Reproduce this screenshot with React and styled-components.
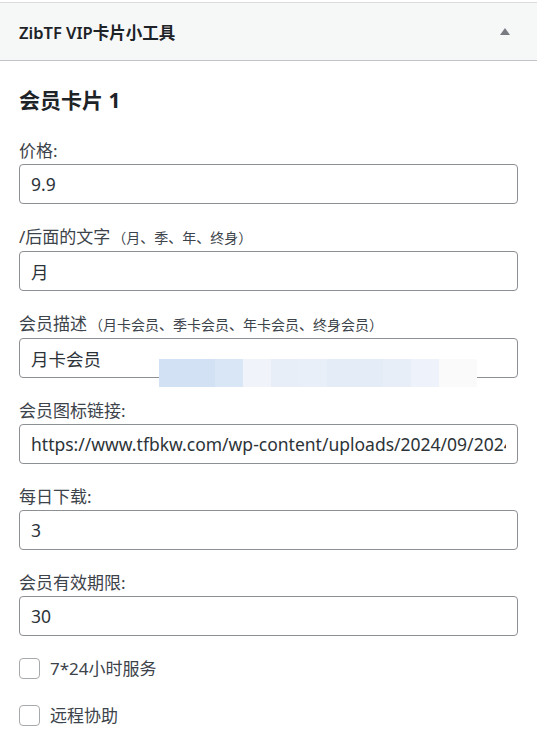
import React from 'react';
import styled, { createGlobalStyle } from 'styled-components';

const Global = createGlobalStyle`
  html, body { margin: 0; padding: 0; background: #fff; }
  body {
    font-family: "Noto Sans", "Noto Sans CJK SC", sans-serif;
    color: #3c434a;
  }
  * { box-sizing: border-box; }
`;

const Widget = styled.div`
  width: 537px;
  padding-top: 2px;
`;

const Header = styled.div`
  height: 59px;
  background: #f6f7f7;
  border-top: 1px solid #dcdcde;
  border-bottom: 1px solid #c3c4c7;
  display: flex;
  align-items: center;
  justify-content: space-between;
  padding: 0 27px 0 19px;
`;

const Title = styled.h3`
  margin: 0;
  font-size: 16.5px;
  font-weight: 600;
  color: #1d2327;
  font-family: "Noto Sans", "Noto Sans CJK SC", sans-serif;
`;

const Toggle = styled.span`
  width: 0;
  height: 0;
  border-left: 5px solid transparent;
  border-right: 5px solid transparent;
  border-bottom: 7px solid #787c82;
`;

const Body = styled.div`
  position: relative;
  padding: 26px 19px 0 19px;
`;

const CardTitle = styled.h2`
  margin: 0;
  font-size: 21px;
  line-height: 26px;
  font-weight: 700;
  color: #1d2327;
`;

const Form = styled.div`
  display: flex;
  flex-direction: column;
  gap: 22px;
  margin-top: 27px;
`;

const Field = styled.div`
  display: flex;
  flex-direction: column;
  gap: 2px;
`;

const Label = styled.label`
  font-size: 17px;
  line-height: 22px;
  color: #3c434a;
`;

const Hint = styled.span`
  font-size: 14px;
  margin-left: 2px;
`;

const Input = styled.input`
  width: 100%;
  height: 40px;
  border: 1px solid #8c8f94;
  border-radius: 4px;
  padding: 0 11px;
  font-family: "Noto Sans", "Noto Sans CJK SC", sans-serif;
  font-size: 17.5px;
  color: #2c3338;
  background: #fff;
  outline: none;
`;

const Checks = styled.div`
  display: flex;
  flex-direction: column;
  gap: 26px;
  margin-top: 22px;
`;

const CheckRow = styled.label`
  display: flex;
  align-items: center;
  gap: 10px;
  font-size: 17px;
  line-height: 20px;
  color: #3c434a;
`;

const Box = styled.span`
  width: 21px;
  height: 21px;
  border: 1px solid #a7aaad;
  border-radius: 4px;
  background: #fff;
  flex: none;
`;

const Mosaic = styled.div`
  position: absolute;
  left: 159px;
  top: 298px;
  height: 28px;
  display: flex;
`;

const Tile = styled.div`
  width: ${(p) => p.w}px;
  height: 100%;
  background: ${(p) => p.c};
`;

const fields = [
  { label: '价格:', value: '9.9' },
  { label: '/后面的文字', hint: '（月、季、年、终身）', value: '月' },
  { label: '会员描述', hint: '（月卡会员、季卡会员、年卡会员、终身会员）', value: '月卡会员' },
  { label: '会员图标链接:', value: 'https://www.tfbkw.com/wp-content/uploads/2024/09/2024091812345678.png' },
  { label: '每日下载:', value: '3' },
  { label: '会员有效期限:', value: '30' },
];

const tiles = [
  [56, '#d2e1f4'],
  [28, '#d9e6f5'],
  [28, '#f0f3f9'],
  [27, '#e8eef8'],
  [29, '#e9eff8'],
  [56, '#e4ecf7'],
  [28, '#e8eef8'],
  [28, '#edf2fb'],
  [38, '#fafafa'],
];

export default function App() {
  return (
    <>
      <Global />
      <Widget>
        <Header>
          <Title>ZibTF VIP卡片小工具</Title>
          <Toggle />
        </Header>
        <Body>
          <CardTitle>会员卡片 1</CardTitle>
          <Form>
            {fields.map((f) => (
              <Field key={f.label}>
                <Label>
                  {f.label}
                  {f.hint && <Hint>{f.hint}</Hint>}
                </Label>
                <Input defaultValue={f.value} readOnly />
              </Field>
            ))}
          </Form>
          <Checks>
            <CheckRow><Box />7*24小时服务</CheckRow>
            <CheckRow><Box />远程协助</CheckRow>
          </Checks>
          <Mosaic>
            {tiles.map(([w, c], i) => (
              <Tile key={i} w={w} c={c} />
            ))}
          </Mosaic>
        </Body>
      </Widget>
    </>
  );
}
